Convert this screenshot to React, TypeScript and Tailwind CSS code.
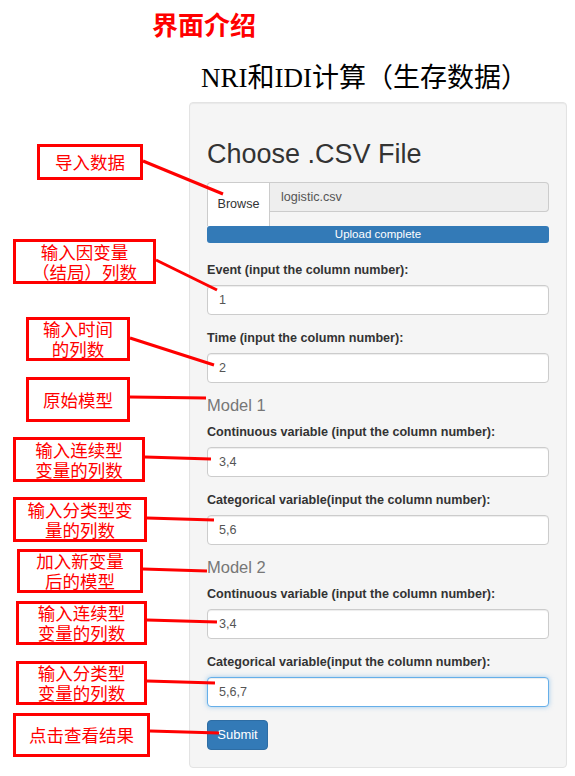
const notes = [
  { pos: "left-[37px] top-[144px] w-[106px] h-[36px]", lines: ["导入数据"] },
  { pos: "left-[13px] top-[239px] w-[143px] h-[45px]", lines: ["输入因变量", "（结局）列数"] },
  { pos: "left-[26px] top-[317px] w-[104px] h-[44px]", lines: ["输入时间", "的列数"] },
  { pos: "left-[26px] top-[377px] w-[104px] h-[45px]", lines: ["原始模型"] },
  { pos: "left-[13px] top-[437px] w-[132px] h-[45px]", lines: ["输入连续型", "变量的列数"] },
  { pos: "left-[13px] top-[497px] w-[134px] h-[45px]", lines: ["输入分类型变", "量的列数"] },
  { pos: "left-[17px] top-[549px] w-[126px] h-[44px]", lines: ["加入新变量", "后的模型"] },
  { pos: "left-[16px] top-[601px] w-[131px] h-[44px]", lines: ["输入连续型", "变量的列数"] },
  { pos: "left-[16px] top-[661px] w-[131px] h-[44px]", lines: ["输入分类型", "变量的列数"] },
  { pos: "left-[13px] top-[713px] w-[137px] h-[44px]", lines: ["点击查看结果"] },
];

// pointer lines from each note to its field
const arrows = [
  [143, 161, 223, 194],
  [156, 260, 217, 290],
  [130, 338, 214, 365],
  [130, 397, 206, 398],
  [145, 457, 211, 459],
  [147, 518, 214, 520],
  [143, 569, 207, 571],
  [147, 620, 217, 622],
  [147, 681, 215, 683],
  [150, 731, 219, 733],
];

function Field({ label, value, focused }: { label: string; value: string; focused?: boolean }) {
  return (
    <div className="mb-[13.5px]">
      <label className="block text-[12.6px] font-bold leading-[18px] mb-[6px] text-[#333]">{label}</label>
      <input
        readOnly
        value={value}
        className={
          focused
            ? "block w-full h-[30px] px-[11px] text-[12.6px] text-[#555] bg-white rounded-[4px] border border-[#66afe9] outline-none shadow-[inset_0_1px_1px_rgba(0,0,0,0.075),0_0_5px_rgba(102,175,233,0.6)]"
            : "block w-full h-[30px] px-[11px] text-[12.6px] text-[#555] bg-white rounded-[4px] border border-[#ccc] outline-none shadow-[inset_0_1px_1px_rgba(0,0,0,0.075)]"
        }
      />
    </div>
  );
}

export default function App() {
  return (
    <div className="relative w-[575px] h-[776px] bg-white font-['Liberation_Sans',Arial,sans-serif] overflow-hidden">
      <h1 className="pl-[152px] pt-[9px] text-[26px] leading-[30px] font-bold text-[#ff0000] font-['Noto_Sans_CJK_SC',sans-serif]">
        界面介绍
      </h1>
      <h2 className="pl-[201px] mt-[24px] mb-[9px] text-[27px] leading-[30px] text-black font-['Liberation_Serif','Noto_Sans_CJK_SC',serif]">
        NRI和IDI计算（生存数据）
      </h2>

      <div className="ml-[189px] w-[378px] bg-[#f5f5f5] border border-[#e3e3e3] rounded-[4px] shadow-[inset_0_1px_1px_rgba(0,0,0,0.05)] px-[17px] pt-[36px] pb-[17px]">
        <h3 className="text-[27px] leading-[30px] text-[#333] mb-[13px]">Choose .CSV File</h3>

        <div className="flex">
          <div className="w-[63px] h-[44px] bg-white border border-b-0 border-[#ccc] rounded-tl-[4px] flex items-center justify-center text-[12.6px] text-[#333]">
            Browse
          </div>
          <div className="flex-1 h-[30px] bg-[#eee] border border-l-0 border-[#ccc] rounded-r-[4px] px-[11px] flex items-center text-[12.6px] text-[#555]">
            logistic.csv
          </div>
        </div>
        <div className="h-[17px] mb-[18px] rounded-[3px] bg-[#337ab7] text-white text-[11.5px] leading-[17px] text-center">
          Upload complete
        </div>

        <Field label="Event (input the column number):" value="1" />
        <Field label="Time (input the column number):" value="2" />

        <div className="text-[16.5px] leading-[18px] text-[#777] mb-[9px]">Model 1</div>
        <Field label="Continuous variable (input the column number):" value="3,4" />
        <Field label="Categorical variable(input the column number):" value="5,6" />

        <div className="text-[16.5px] leading-[18px] text-[#777] mb-[9px]">Model 2</div>
        <Field label="Continuous variable (input the column number):" value="3,4" />
        <Field label="Categorical variable(input the column number):" value="5,6,7" focused />

        <button className="block w-[61px] h-[30px] bg-[#337ab7] border border-[#2e6da4] rounded-[4px] text-white text-[13px]">
          Submit
        </button>
      </div>

      {notes.map((n, i) => (
        <div
          key={i}
          className={`absolute ${n.pos} bg-white border-[3px] border-[#ff0000] flex flex-col items-center justify-center text-center text-[17.5px] leading-[20px] text-[#ff0000] font-['Noto_Sans_CJK_SC',sans-serif]`}
        >
          {n.lines.map((t, j) => (
            <span key={j}>{t}</span>
          ))}
        </div>
      ))}

      <svg className="absolute left-0 top-0 pointer-events-none" width="575" height="776">
        {arrows.map(([x1, y1, x2, y2], i) => (
          <line key={i} x1={x1} y1={y1} x2={x2} y2={y2} stroke="#ff0000" strokeWidth="3" />
        ))}
      </svg>
    </div>
  );
}
